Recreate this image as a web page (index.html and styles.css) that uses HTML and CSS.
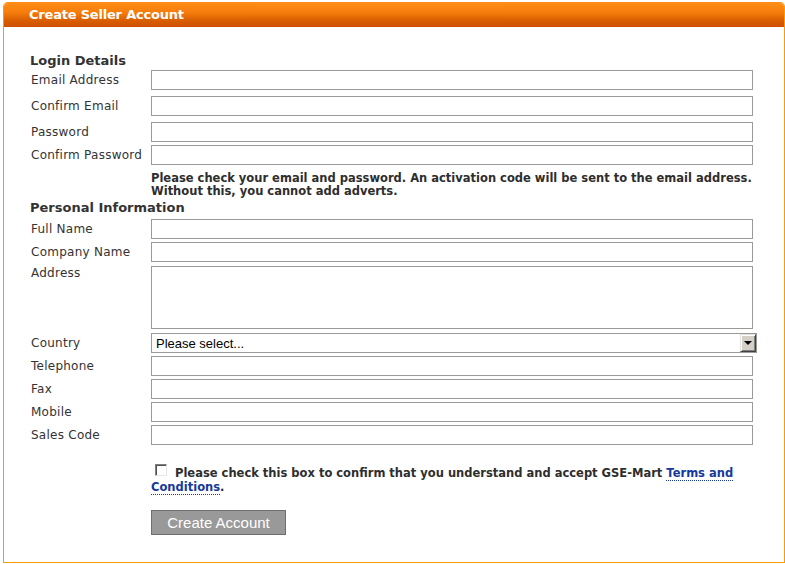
FILE: index.html
```html
<!DOCTYPE html>
<html lang="en">
<head>
<meta charset="utf-8">
<title>Create Seller Account</title>
<link rel="stylesheet" href="styles.css">
</head>
<body>
<div class="panel">
  <div class="panel-head">Create Seller Account</div>
  <form class="panel-body">
    <h2 class="section-title">Login Details</h2>
    <div class="row row-wide"><label class="label">Email Address</label><input class="field" type="text"></div>
    <div class="row row-wide"><label class="label">Confirm Email</label><input class="field" type="text"></div>
    <div class="row"><label class="label">Password</label><input class="field" type="password"></div>
    <div class="row"><label class="label">Confirm Password</label><input class="field" type="password"></div>
    <p class="note">Please check your email and password. An activation code will be sent to the email address.<br>Without this, you cannot add adverts.</p>

    <h2 class="section-title section-personal">Personal Information</h2>
    <div class="row"><label class="label">Full Name</label><input class="field" type="text"></div>
    <div class="row row-mid"><label class="label">Company Name</label><input class="field" type="text"></div>
    <div class="row row-top row-mid"><label class="label label-top">Address</label><textarea class="field area"></textarea></div>
    <div class="row"><label class="label">Country</label>
      <div class="select">
        <select class="select-native"><option>Please select...</option></select>
        <span class="select-btn"><span class="select-arrow"></span></span>
      </div>
    </div>
    <div class="row"><label class="label">Telephone</label><input class="field" type="text"></div>
    <div class="row"><label class="label">Fax</label><input class="field" type="text"></div>
    <div class="row"><label class="label">Mobile</label><input class="field" type="text"></div>
    <div class="row"><label class="label">Sales Code</label><input class="field" type="text"></div>

    <p class="agree"><input class="check" type="checkbox"> Please check this box to confirm that you understand and accept GSE-Mart <a class="link" href="#">Terms and</a><br><a class="link" href="#">Conditions</a>.</p>

    <button class="submit" type="button">Create Account</button>
  </form>
</div>
</body>
</html>
```

FILE: styles.css
```css
html, body {
  margin: 0;
  padding: 0;
  background: #fff;
}

body {
  font-family: "DejaVu Sans", Verdana, sans-serif;
  color: #333;
}

.panel {
  box-sizing: border-box;
  width: 782px;
  height: 561px;
  margin: 2px 0 0 3px;
  border: 1px solid #f99a06;
  border-top-color: #ff8c14;
  border-radius: 5px 5px 0 0;
  background: #fff;
}

.panel-head {
  height: 24px;
  line-height: 24px;
  padding-left: 25px;
  border-radius: 4px 4px 0 0;
  background: linear-gradient(to bottom, #ff8e17 0%, #f57c0c 40%, #d85c02 75%, #cd5000 100%);
  color: #fff;
  font-weight: bold;
  font-size: 13px;
  letter-spacing: -0.2px;
}

.panel-body {
  margin: 0;
  padding: 26px 0 0 27px;
}

.section-title {
  margin: 0 0 1px -1px;
  font-size: 13px;
  line-height: 16px;
  font-weight: bold;
  color: #333;
}

.section-personal {
  margin-top: 2px;
  margin-bottom: 3px;
}

.row {
  display: flex;
  align-items: center;
  margin-bottom: 3px;
}

.row-wide {
  margin-bottom: 6px;
}

.row-mid {
  margin-bottom: 4px;
}

.row-top {
  align-items: flex-start;
}

.label {
  flex: none;
  width: 120px;
  font-size: 12px;
  line-height: 14px;
  letter-spacing: 0.25px;
  color: #333;
}

.label-top {
  padding-top: 0;
}

.field {
  box-sizing: border-box;
  display: block;
  width: 602px;
  height: 20px;
  margin: 0;
  padding: 0 3px;
  border: 1px solid #9a9a9a;
  background: #fff;
  font-family: "Liberation Sans", Arial, sans-serif;
  font-size: 13px;
  outline: none;
}

.area {
  height: 63px;
  resize: none;
}

.select {
  box-sizing: border-box;
  display: flex;
  width: 606px;
  height: 20px;
  border: 1px solid #9a9a9a;
  background: #fff;
}

.select-native {
  flex: 1;
  min-width: 0;
  height: 18px;
  margin: 0;
  padding: 0 0 0 4px;
  border: none;
  background: transparent;
  -webkit-appearance: none;
  appearance: none;
  font-family: "Liberation Sans", Arial, sans-serif;
  font-size: 13px;
  color: #000;
  outline: none;
}

.select-btn {
  box-sizing: border-box;
  flex: none;
  display: flex;
  align-items: center;
  justify-content: center;
  width: 16px;
  height: 18px;
  border-style: solid;
  border-width: 1px;
  border-color: #e4e1da #404040 #404040 #e4e1da;
  box-shadow: inset 1px 1px 0 #fff, inset -1px -1px 0 #808080;
  background: #d4d0c8;
}

.select-arrow {
  width: 0;
  height: 0;
  border-left: 4px solid transparent;
  border-right: 4px solid transparent;
  border-top: 4px solid #000;
}

.note {
  margin: 7px 0 0 120px;
  font-size: 11.5px;
  line-height: 13px;
  font-weight: bold;
  color: #2e2e2e;
  white-space: nowrap;
}

.agree {
  margin: 21px 0 0 120px;
  font-size: 11.5px;
  line-height: 14px;
  font-weight: bold;
  color: #2e2e2e;
  white-space: nowrap;
}

.check {
  -webkit-appearance: none;
  appearance: none;
  box-sizing: border-box;
  display: inline-block;
  vertical-align: top;
  width: 12px;
  height: 12px;
  margin: -2px 4px 0 4px;
  border: 1px solid;
  border-color: #808080 #e6e6e6 #e6e6e6 #808080;
  box-shadow: inset 1px 1px 0 #505050;
  background: #fff;
}

.link {
  color: #16399a;
  text-decoration: none;
  border-bottom: 1px dotted #16399a;
}

.submit {
  display: block;
  box-sizing: border-box;
  width: 135px;
  height: 25px;
  margin: 16px 0 0 120px;
  padding: 0;
  border: 1px solid #6e6e6e;
  background: #999;
  color: #fff;
  font-family: "Liberation Sans", Arial, sans-serif;
  font-size: 15px;
  cursor: pointer;
}
```
